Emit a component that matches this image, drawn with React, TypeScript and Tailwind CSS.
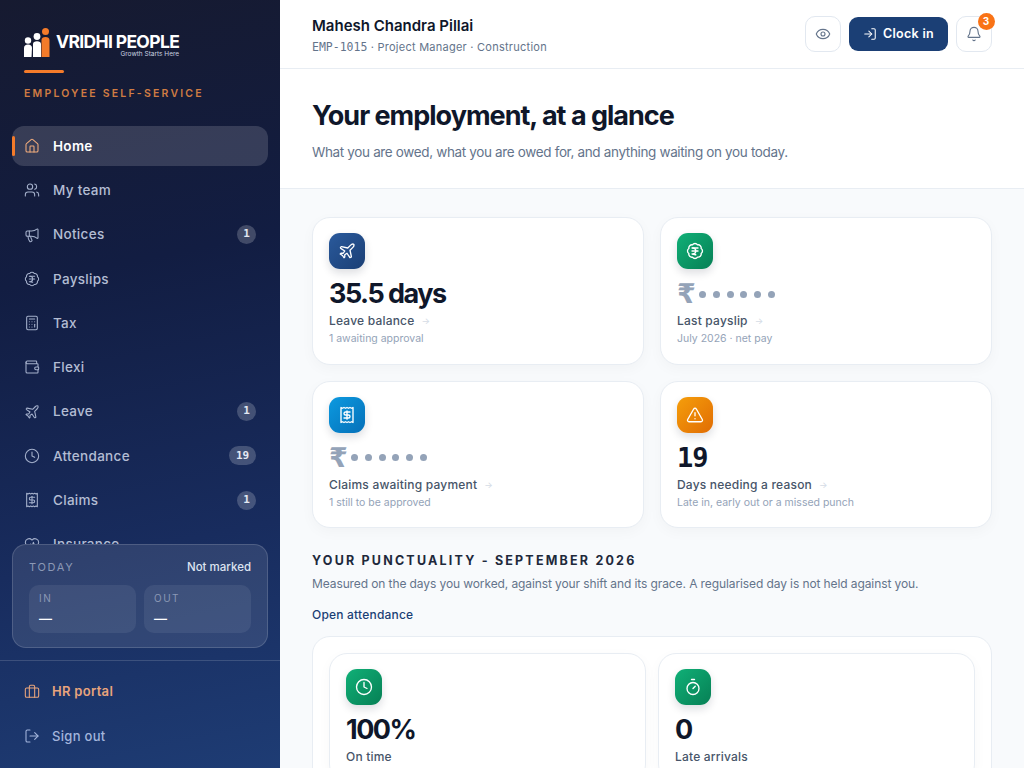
import {
  BadgeIndianRupee,
  Bell,
  Briefcase,
  Calculator,
  Clock,
  Eye,
  HeartPulse,
  House,
  LogIn,
  LogOut,
  Megaphone,
  Plane,
  Receipt,
  Timer,
  TriangleAlert,
  Users,
  Wallet,
} from "lucide-react";

const navItems = [
  { label: "Home", icon: House, active: true },
  { label: "My team", icon: Users },
  { label: "Notices", icon: Megaphone, badge: "1" },
  { label: "Payslips", icon: BadgeIndianRupee },
  { label: "Tax", icon: Calculator },
  { label: "Flexi", icon: Wallet },
  { label: "Leave", icon: Plane, badge: "1" },
  { label: "Attendance", icon: Clock, badge: "19" },
  { label: "Claims", icon: Receipt, badge: "1" },
  { label: "Insurance", icon: HeartPulse },
];

const Logo = () => (
  <div className="flex h-[29px] items-end gap-[6px]">
    <svg width="26" height="29" viewBox="0 0 26 29" className="shrink-0">
      <circle cx="4" cy="12.5" r="3.2" fill="#fff" />
      <path d="M0 20c0-2 1.5-3.5 4-3.5s4 1.5 4 3.5l-.5 9H0z" fill="#fff" />
      <circle cx="13" cy="8.5" r="3.4" fill="#fff" />
      <path d="M9 16c0-1.8 1.6-2.8 4-2.8s4 1 4 2.8v13H9z" fill="#fff" />
      <circle cx="21.5" cy="3.5" r="3.5" fill="#f47b2a" />
      <path d="M17.5 12c0-2 1.6-3 4-3s4 1 4 3v17h-8z" fill="#f47b2a" />
    </svg>
    <div className="-mb-[1px] flex flex-col items-end font-['Inter'] text-white">
      <span className="text-[17.5px] leading-[18px] font-bold tracking-[-0.65px] whitespace-nowrap">VRIDHI PEOPLE</span>
      <span className="text-[6.5px] leading-[7px] whitespace-nowrap text-[#cbd2e0]">Growth Starts Here</span>
    </div>
  </div>
);

const NavRow = ({ item }: { item: (typeof navItems)[number] }) => {
  const Icon = item.icon;
  return (
    <div
      className={
        "relative flex h-10 shrink-0 items-center rounded-[12px] pr-3 pl-3 " +
        (item.active ? "bg-white/15" : "")
      }
    >
      {item.active && <span className="absolute top-[10px] left-0 h-5 w-[3px] rounded-full bg-[#f47b2a]" />}
      <Icon size={16} strokeWidth={1.6} className={item.active ? "text-[#f0ab7c]" : "text-[#a5b1cc]"} />
      <span
        className={
          "ml-[13px] text-[13.5px] tracking-[0.3px] " +
          (item.active ? "font-semibold text-white" : "font-medium text-[#b3bdd3]")
        }
      >
        {item.label}
      </span>
      {item.badge && (
        <span
          className={
            "ml-auto flex h-[19px] items-center justify-center rounded-full bg-white/20 font-['DejaVu_Sans_Mono'] text-[11px] font-bold text-[#e4e8f2] " +
            (item.badge.length > 1 ? "w-[27px]" : "w-[19px]")
          }
        >
          {item.badge}
        </span>
      )}
    </div>
  );
};

const Sidebar = () => (
  <aside className="flex h-screen w-[280px] shrink-0 flex-col bg-[linear-gradient(168deg,#161a30_0%,#121d42_35%,#182c5e_70%,#1e3c74_100%)] font-['Inter']">
    <div className="shrink-0 px-6 pt-[28px] pb-[24px]">
      <Logo />
      <div className="mt-[13px] h-[3px] w-10 rounded-full bg-[#f47b2a]" />
      <div className="mt-[13px] text-[10.5px] leading-[16px] font-semibold tracking-[2.2px] text-[#d07c43]">
        EMPLOYEE SELF-SERVICE
      </div>
    </div>
    <nav className="flex min-h-0 flex-1 flex-col gap-[4.25px] overflow-hidden px-3">
      {navItems.map((item) => (
        <NavRow key={item.label} item={item} />
      ))}
    </nav>
    <div className="mx-3 mb-3 shrink-0 rounded-[14px] border border-white/15 bg-white/10 px-4 pt-[14px] pb-[14px]">
      <div className="flex items-center justify-between">
        <span className="text-[11px] leading-4 tracking-[1.7px] text-[#8b98b5]">TODAY</span>
        <span className="text-[11.5px] leading-4 font-medium text-[#dde3f0]">Not marked</span>
      </div>
      <div className="mt-[10px] grid grid-cols-2 gap-2">
        {["IN", "OUT"].map((label) => (
          <div key={label} className="h-12 rounded-[10px] bg-white/[0.07] px-[10px] pt-[6px]">
            <div className="text-[10px] leading-[14px] tracking-[1.5px] text-[#8b98b5]">{label}</div>
            <div className="mt-[4px] text-[13px] leading-[18px] font-semibold text-white">—</div>
          </div>
        ))}
      </div>
    </div>
    <div className="flex shrink-0 flex-col gap-[4.25px] border-t border-white/15 px-3 pt-[11px] pb-[11.75px]">
      <div className="flex h-10 items-center pl-3">
        <Briefcase size={16} strokeWidth={1.6} className="text-[#e8a47c]" />
        <span className="ml-[12px] text-[13px] font-semibold tracking-[0.3px] text-[#e8a47c]">HR portal</span>
      </div>
      <div className="flex h-10 items-center pl-3">
        <LogOut size={16} strokeWidth={1.6} className="text-[#a3b5dc]" />
        <span className="ml-[12px] text-[13px] font-medium tracking-[0.3px] text-[#a3b5dc]">Sign out</span>
      </div>
    </div>
  </aside>
);

const Masked = () => (
  <div className="flex h-[30px] items-center text-[#94a3b8]">
    <span className="font-['DejaVu_Sans'] text-[27px] leading-[32px] font-bold">₹</span>
    <span className="ml-[5px] flex gap-[6.7px]">
      {[0, 1, 2, 3, 4, 5].map((i) => (
        <span key={i} className="h-[7px] w-[7px] rounded-full bg-[#94a3b8]" />
      ))}
    </span>
  </div>
);

type StatProps = {
  icon: typeof Plane;
  tone: string;
  value?: React.ReactNode;
  label: string;
  hint?: string;
  arrow?: boolean;
};

const StatCard = ({ icon: Icon, tone, value, label, hint, arrow = true }: StatProps) => (
  <div className="rounded-[18px] border border-[#e8edf3] bg-white px-4 py-[15px] shadow-[0_4px_14px_rgba(15,23,42,0.03)]">
    <div className={"flex h-9 w-9 items-center justify-center rounded-[11px] text-white shadow-[0_4px_8px_rgba(15,23,42,0.14)] " + tone}>
      <Icon size={18} strokeWidth={1.8} />
    </div>
    <div className="mt-[10px] h-[30px] text-[27px] leading-[30px] font-bold tracking-[-1.5px] text-[#0f172a]">{value}</div>
    <div className="mt-[3px] flex h-[18px] items-center text-[12px] font-medium tracking-[0.2px] text-[#475569]">
      {label}
      {arrow && <span className="ml-[7px] text-[9px] text-[#d5dce6]">→</span>}
    </div>
    {hint && <div className="h-[18.5px] text-[10.5px] leading-[18px] text-[#94a3b8]">{hint}</div>}
  </div>
);

export default function App() {
  return (
    <div className="flex h-screen overflow-hidden bg-[#f8fafc] font-['Inter']">
      <Sidebar />
      <main className="min-w-0 flex-1 overflow-hidden">
        <header className="flex h-[69px] items-center justify-between border-b border-[#e8edf3] bg-white px-8">
          <div className="pt-[3px]">
            <div className="text-[15px] leading-[20px] font-semibold text-[#0f172a]">Mahesh Chandra Pillai</div>
            <div className="mt-[3px] text-[11px] leading-4 tracking-[0.25px] text-[#64748b]">
              <span className="font-['DejaVu_Sans_Mono'] text-[11.5px] tracking-normal">EMP-1015</span> · Project Manager · Construction
            </div>
          </div>
          <div className="flex items-center gap-2">
            <button className="flex h-9 w-9 items-center justify-center rounded-[10px] border border-[#e2e8f0] bg-white text-[#64748b]">
              <Eye size={16} strokeWidth={1.7} />
            </button>
            <button className="flex h-[34px] w-[99px] items-center justify-center gap-[6px] rounded-[9px] bg-[#1b3f75] text-[12.5px] font-semibold tracking-[0.3px] text-white">
              <LogIn size={14} strokeWidth={1.8} />
              Clock in
            </button>
            <div className="relative">
              <button className="flex h-9 w-9 items-center justify-center rounded-[10px] border border-[#e2e8f0] bg-white text-[#64748b]">
                <Bell size={16} strokeWidth={1.7} />
              </button>
              <span className="absolute -top-[3.5px] -right-[2.5px] flex h-[17px] w-[17px] items-center justify-center rounded-full bg-[#f97316] text-[10px] font-bold text-white">
                3
              </span>
            </div>
          </div>
        </header>
        <section className="h-[120px] border-b border-[#e8edf3] bg-white px-8 pt-[28px]">
          <h1 className="text-[27px] leading-[38px] font-bold tracking-[-1px] text-[#0f172a]">Your employment, at a glance</h1>
          <p className="mt-[7px] text-[13.5px] leading-[20px] tracking-[-0.35px] text-[#64748b]">
            What you are owed, what you are owed for, and anything waiting on you today.
          </p>
        </section>
        <div className="px-8 pt-7">
          <div className="grid grid-cols-2 gap-4">
            <StatCard icon={Plane} tone="bg-gradient-to-br from-[#2a5a9c] to-[#1b3f75]" value="35.5 days" label="Leave balance" hint="1 awaiting approval" />
            <StatCard icon={BadgeIndianRupee} tone="bg-gradient-to-br from-[#10b077] to-[#078055]" value={<Masked />} label="Last payslip" hint="July 2026 · net pay" />
            <StatCard icon={Receipt} tone="bg-gradient-to-br from-[#0d9ae0] to-[#0670b8]" value={<Masked />} label="Claims awaiting payment" hint="1 still to be approved" />
            <StatCard
              icon={TriangleAlert}
              tone="bg-gradient-to-br from-[#f59e0b] to-[#e06c04]"
              value={<span className="font-['DejaVu_Sans_Mono'] tracking-[-1px]">19</span>}
              label="Days needing a reason"
              hint="Late in, early out or a missed punch"
            />
          </div>
          <h2 className="mt-[23px] text-[12.5px] leading-[20px] font-bold tracking-[2.2px] text-[#1e293b]">
            YOUR PUNCTUALITY - SEPTEMBER 2026
          </h2>
          <p className="mt-[3px] text-[12px] leading-[20px] tracking-[-0.1px] text-[#64748b]">
            Measured on the days you worked, against your shift and its grace. A regularised day is not held against you.
          </p>
          <a className="mt-[11px] block text-[12px] leading-[20px] font-medium tracking-[0.2px] text-[#1b3f75]">Open attendance</a>
          <div className="mt-[11px] rounded-[18px] border border-[#e8edf3] bg-white p-4">
            <div className="grid grid-cols-2 gap-3">
              <StatCard icon={Clock} tone="bg-gradient-to-br from-[#10b077] to-[#078055]" value="100%" label="On time" arrow={false} />
              <StatCard icon={Timer} tone="bg-gradient-to-br from-[#10b077] to-[#078055]" value="0" label="Late arrivals" arrow={false} />
            </div>
          </div>
        </div>
      </main>
    </div>
  );
}
